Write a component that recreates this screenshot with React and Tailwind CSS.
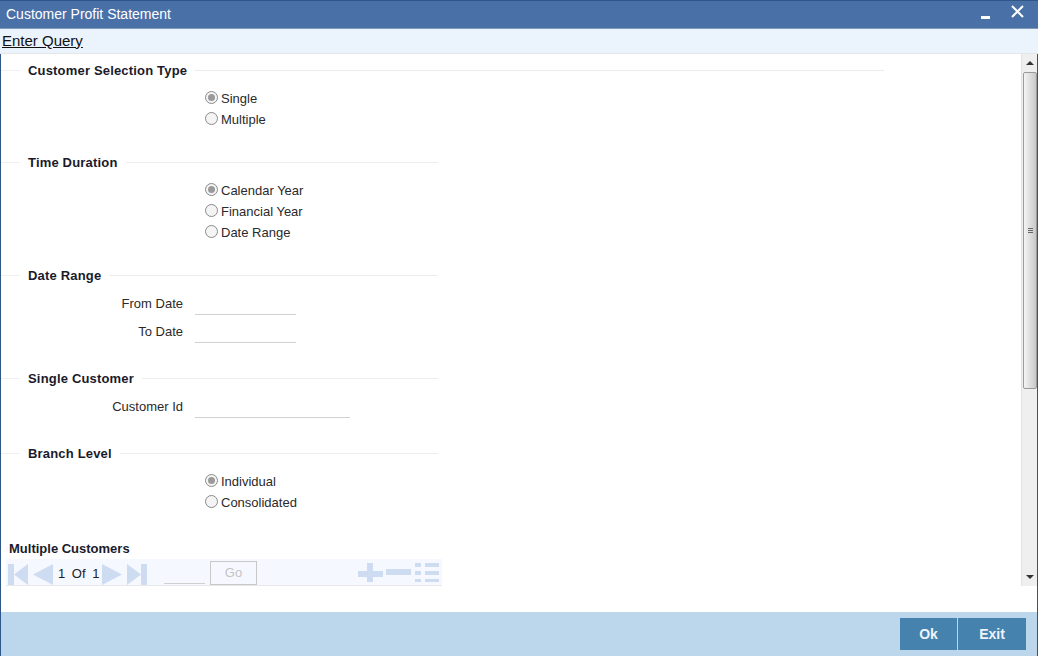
const font = { fontFamily: '"Liberation Sans", Arial, sans-serif' };

function Legend({ title, wide }) {
  return (
    <div className={`flex h-[20px] items-center ${wide ? 'w-[883px]' : 'w-[437px]'}`}>
      <div className="h-px w-[19px] bg-[#f0f0f0]" />
      <span className="px-[8px] pt-[2px] text-[13px] font-bold tracking-[0.18px] text-[#1a1a2a]">{title}</span>
      <div className="h-px flex-1 bg-[#ececec]" />
    </div>
  );
}

function Radio({ label, checked }) {
  return (
    <div className="flex h-[21px] items-center pl-[204px] text-[13px] text-[#2a2a2a]">
      <span className="mb-[2px] flex h-[13px] w-[13px] items-center justify-center rounded-full border border-[#8a8a8a] bg-[#f4f4f4]">
        {checked && <span className="h-[7px] w-[7px] rounded-full bg-[#9a9a9a]" />}
      </span>
      <span className="ml-[3px]">{label}</span>
    </div>
  );
}

function Field({ label, width }) {
  return (
    <div className="flex h-[28px] items-center text-[13px] text-[#2a2a2a]">
      <span className="w-[182px] pt-[2px] text-right">{label}</span>
      <div className={`ml-[12px] h-[26px] self-start border-b border-[#d0d0d0] ${width}`} />
    </div>
  );
}

function NavIcon({ d, w = 20, h = 21, className = '' }) {
  return (
    <svg width={w} height={h} viewBox={`0 0 ${w} ${h}`} className={`shrink-0 ${className}`}>
      <path d={d} fill="#cddcf0" />
    </svg>
  );
}

export default function App() {
  return (
    <div className="flex h-[658px] w-[1038px] flex-col overflow-hidden bg-white" style={font}>
      <div className="flex h-[29px] items-center justify-between border-t border-b border-t-[#2f5688] border-b-[#7f9bb8] bg-[#4a70a8] pl-[6px] pr-[14px] text-[14px] text-white">
        <span className="mb-[1px]">Customer Profit Statement</span>
        <div className="flex items-center gap-[21px]">
          <div className="mt-[5px] h-[3px] w-[9px] bg-white" />
          <svg width="13" height="13" viewBox="0 0 13 13" className="mb-[7px]">
            <path d="M1 1 L12 12 M12 1 L1 12" stroke="#fff" strokeWidth="2" />
          </svg>
        </div>
      </div>

      <div className="flex h-[25px] items-center border-b border-[#e6e6e6] bg-[#ebf3fd] pl-[2px] text-[15px] text-[#111] underline">
        Enter Query
      </div>

      <div className="flex h-[558px] border-l border-r border-[#2f5688]">
        <div className="flex flex-1 flex-col pt-[6px]">
          <Legend title="Customer Selection Type" wide />
          <div className="mt-[8px]">
            <Radio label="Single" checked />
            <Radio label="Multiple" />
          </div>

          <div className="mt-[22px]"><Legend title="Time Duration" /></div>
          <div className="mt-[8px]">
            <Radio label="Calendar Year" checked />
            <Radio label="Financial Year" />
            <Radio label="Date Range" />
          </div>

          <div className="mt-[22px]"><Legend title="Date Range" /></div>
          <div className="mt-[4px]">
            <Field label="From Date" width="w-[101px]" />
            <Field label="To Date" width="w-[101px]" />
          </div>

          <div className="mt-[23px]"><Legend title="Single Customer" /></div>
          <div className="mt-[4px]">
            <Field label="Customer Id" width="w-[155px]" />
          </div>

          <div className="mt-[23px]"><Legend title="Branch Level" /></div>
          <div className="mt-[8px]">
            <Radio label="Individual" checked />
            <Radio label="Consolidated" />
          </div>

          <div className="mt-[26px] pl-[8px] text-[13px] font-bold leading-[20px] text-[#1a1a2a]">Multiple Customers</div>

          <div className="ml-[5px] flex h-[27px] w-[436px] items-end border-b border-[#e8e8e8] bg-[#f5f8fe] pl-[2px] text-[13px] text-[#222]">
            <NavIcon d="M0 0 H6 V21 H0 Z M6 10.5 L20 0 V21 Z" />
            <NavIcon className="ml-[5px]" d="M0 10.5 L20 0 V21 Z" />
            <span className="mb-[2px] ml-[5px] w-[44px] [word-spacing:3px]">1 Of 1</span>
            <NavIcon d="M0 0 L20 10.5 L0 21 Z" />
            <NavIcon className="ml-[5px]" d="M0 0 L14 10.5 L0 21 Z M14 0 H20 V21 H14 Z" />
            <div className="mb-[1px] ml-[17px] h-[22px] w-[41px] border-b border-[#cfcfcf]" />
            <div className="ml-[5px] flex h-[24px] w-[47px] items-center justify-center border border-[#c8c8c8] bg-[#f5f8fe] text-[13px] text-[#c4c4c4]">Go</div>
            <div className="mb-[3px] ml-auto flex items-end gap-[3px] pr-[3px]">
              <NavIcon w={25} h={19} d="M0 8 H9 V0 H15 V8 H25 V14 H15 V19 H9 V14 H0 Z" />
              <NavIcon w={25} h={19} d="M0 6 H25 V12 H0 Z" />
              <NavIcon className="ml-[1px]" w={24} h={19} d="M0 0 H6 V4 H0 Z M10 0 H24 V4 H10 Z M0 8 H6 V12 H0 Z M10 8 H24 V12 H10 Z M0 16 H6 V19 H0 Z M10 16 H24 V19 H10 Z" />
            </div>
          </div>
        </div>

        <div className="flex h-[532px] w-[16px] flex-col items-end border-l border-[#e2e2e2] bg-[#efefef]">
          <div className="flex h-[18px] w-full items-center justify-center">
            <div className="h-0 w-0 border-x-[4px] border-b-[4px] border-x-transparent border-b-[#333]" />
          </div>
          <div className="flex h-[317px] w-[14px] items-center justify-center rounded-[2px] border border-[#9a9a9a] bg-gradient-to-r from-[#f4f4f4] to-[#c8c8c8]">
            <div className="flex flex-col gap-[1px]">
              <div className="h-px w-[5px] bg-[#666]" />
              <div className="h-px w-[5px] bg-[#666]" />
              <div className="h-px w-[5px] bg-[#666]" />
            </div>
          </div>
          <div className="flex-1" />
          <div className="flex h-[18px] w-full items-center justify-center">
            <div className="h-0 w-0 border-x-[4px] border-t-[4px] border-x-transparent border-t-[#333]" />
          </div>
        </div>
      </div>

      <div className="flex h-[44px] items-center justify-end border-l border-r border-[#2f5688] bg-[#bcd7ec] pr-[11px] text-[14px] font-bold text-[#eef4f9]">
        <div className="flex h-[32px] w-[57px] items-center justify-center bg-[#4682ae]">Ok</div>
        <div className="ml-[1px] flex h-[32px] w-[68px] items-center justify-center bg-[#4682ae]">Exit</div>
      </div>
    </div>
  );
}
